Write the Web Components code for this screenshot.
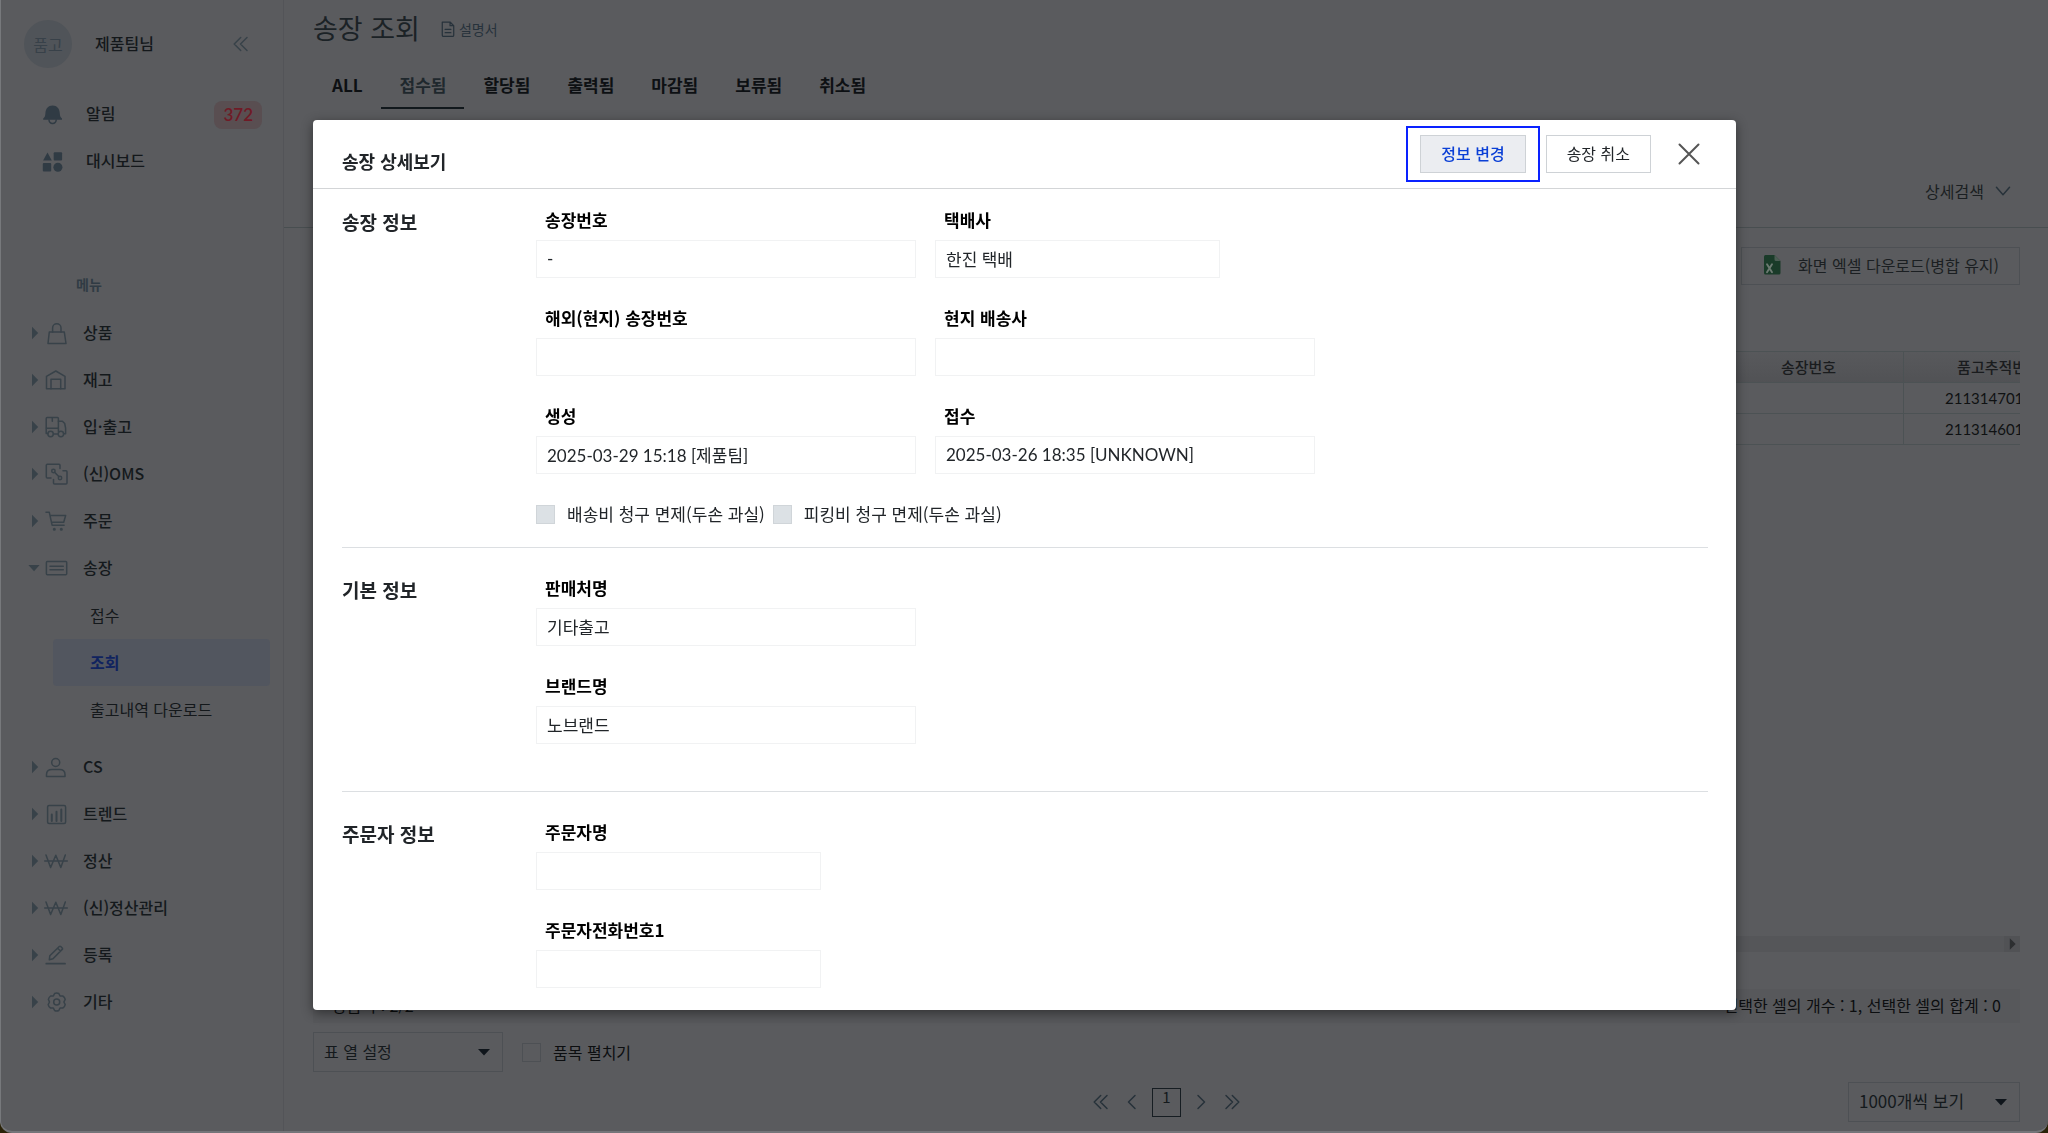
<!DOCTYPE html>
<html lang="ko">
<head>
<meta charset="utf-8">
<title>송장 조회</title>
<style>
  html, body { height: 100%; }
  body {
    margin: 0;
    overflow: hidden;
    background: #2a2208;
    color: #14181b;
    font-family: "Noto Sans CJK KR", sans-serif;
    font-size: 16px;
    line-height: 24px;
    --bg: #5a5b5e;
    --line: #4d5054;
    --icon: #384249;
    --numbers: Lato, "Noto Sans CJK KR", sans-serif;
  }
</style>
</head>
<body>
<app-shell>
  <side-bar slot="side"></side-bar>
  <invoice-page></invoice-page>
</app-shell>
<detail-dialog heading="송장 상세보기">
  <form-section heading="송장 정보">
    <form-row>
      <form-field label="송장번호" value="-"></form-field>
      <form-field label="택배사" value="한진 택배" size="short"></form-field>
    </form-row>
    <form-row>
      <form-field label="해외(현지) 송장번호"></form-field>
      <form-field label="현지 배송사"></form-field>
    </form-row>
    <form-row>
      <form-field label="생성" value="2025-03-29 15:18 [제품팀]"></form-field>
      <form-field label="접수" value="2025-03-26 18:35 [UNKNOWN]"></form-field>
    </form-row>
    <form-row tight>
      <check-box label="배송비 청구 면제(두손 과실)" disabled></check-box>
      <check-box label="피킹비 청구 면제(두손 과실)" disabled></check-box>
    </form-row>
  </form-section>
  <form-section heading="기본 정보" roomy>
    <form-row><form-field label="판매처명" value="기타출고"></form-field></form-row>
    <form-row><form-field label="브랜드명" value="노브랜드"></form-field></form-row>
  </form-section>
  <form-section heading="주문자 정보" roomy>
    <form-row><form-field label="주문자명" size="short"></form-field></form-row>
    <form-row><form-field label="주문자전화번호1" size="short"></form-field></form-row>
  </form-section>
</detail-dialog>

<script>
(function () {
  const ICONS = {
    bag: '<path d="M4.3 10h15L21 21.5H3z"/><path d="M7.6 10V6a4.2 4.2 0 0 1 8.4 0v4"/>',
    warehouse: '<path d="M1.5 19.7V7.3L10.8 2 20 7.3v12.4z"/><path d="M6 19.7V10.3h9.7v9.4"/>',
    truck: '<rect x="1.2" y="1.5" width="12.2" height="10.7" rx="1"/><path d="M7.3 2v3.2M1.2 12v5.5h1.5M8.5 18h4.3M13.4 5.3h4l2.3 2.2.9 4.7v5.6h-2M13.4 12v3.5"/><circle cx="5.6" cy="18" r="2.7"/><circle cx="15.9" cy="18" r="2.7"/>',
    link: '<path d="M15 5.5V2.200q0-1-1-1H2.300q-1 0-1 1V14q0 1 1 1H6"/><path d="M18 7.700h3q1 0 1 1V20q0 1-1 1H9.500q-1 0-1-1v-3.500M9.800 9.400l3.900 4.200"/><circle cx="8.400" cy="8" r="1.700"/><circle cx="15" cy="15" r="1.700"/>',
    cart: '<path d="M1 2.300h3.300l2.800 12.900h12M5 5.400h15.700l-2 6.900H6.500"/><circle cx="9.300" cy="19.300" r=".8"/><circle cx="16.300" cy="19.300" r=".8"/>',
    card: '<rect x="1.400" y="4.600" width="20.300" height="13.200" rx="1"/><path d="M5 9.300h13.300M5 12.800h13.300"/>',
    person: '<circle cx="10.700" cy="6.500" r="4"/><path d="M1.500 20.500v-2q0-5 5.500-5h7.500q5.500 0 5.500 5v2z"/>',
    chart: '<rect x="2.600" y="2.600" width="18" height="18" rx="1.500"/><path d="M6.800 11.500V18M11.500 8.700V18M16.300 6.500V18" stroke-width="2"/>',
    won: '<path d="M-.3 11H22.300M1 5l4.600 12.500L10.800 5.300l5 12.200L20.300 5"/>',
    pencil: '<path d="M1.300 19.700H20" stroke-width="1.800"/><path d="M4.300 15.800l.5-4L14.300 2.500q.7-.7 1.400 0l1.500 1.500q.7.700 0 1.400L8 14.700zM12.700 4.200l2.800 2.800"/>',
    gear: '<circle cx="11.700" cy="11" r="3"/><path d="M9.600 2.500q2.100-1 4.200 0l1.200 2.400 2.800.1q2 1.200 2.400 3.400L18.900 11l1.300 2.600q-.4 2.200-2.400 3.400l-2.800.1-1.200 2.400q-2.100 1-4.200 0l-1.200-2.400-2.800-.1q-2-1.200-2.400-3.400L4.500 11 3.400 8.400Q3.800 6.200 5.600 5l2.800-.1z"/>',
    bell: '<g fill="currentColor" stroke="none"><path d="M1.200 15.700v-1.200c1.600-1.200 2-2.300 2.200-5 .2-4.800 2.800-8 7.200-8s7 3.200 7.200 8c.2 2.700.6 3.800 2.200 5v1.200z"/></g><path d="M7 16c.4 4.600 6.800 4.600 7.200 0"/>',
    shapes: '<g fill="currentColor" stroke="none"><path d="M5.500 1.600l4.300 8H1.100z"/><rect x="11.700" y="1.200" width="8.400" height="8.400" rx="1"/><rect x=".8" y="12" width="8.400" height="8.400" rx="1"/><circle cx="15.900" cy="16.200" r="4.500"/></g>',
    first: '<path d="M10.700 4.500L4.200 11l6.500 6.500M17 4.500L10.500 11l6.500 6.500"/>',
    prev: '<path d="M14 4.500L7.500 11l6.500 6.500"/>',
    next: '<path d="M8 4.500l6.500 6.500L8 17.500"/>',
    last: '<path d="M5 4.500l6.500 6.500L5 17.500M11.300 4.500l6.500 6.500-6.500 6.500"/>',
    down: '<path d="M3 6.500l8 9 8-9" stroke-width="1.800"/>',
    close: '<path stroke-width="2" d="M1.500 1.500l19 19M20.500 1.500l-19 19"/>',
    document: '<path d="M4 2.500h9.500L18 7v11.500q0 1.500-1.500 1.500h-11Q4 20 4 18.500zM13.500 2.500V7H18M7.500 11.500h7M7.500 15.500h7"/>',
    excel: '<g stroke="none"><path fill="#1a3b29" d="M3 2.500q0-1.500 1.500-1.500h9L19.500 7v12q0 1.500-1.500 1.500H4.500Q3 20.500 3 19z"/><path fill="#4c5d54" d="M13.500 1l6 6h-4.500q-1.500 0-1.500-1.500z"/></g><path stroke="#6d7a72" stroke-width="1.900" d="M6 10.200l5 8M11 10.200l-5 8"/>',
    right: '<path fill="currentColor" stroke="none" d="M8 3l8 8-8 8z"/>',
    caret: '<path fill="currentColor" stroke="none" d="M5 8h12l-6 6.500z"/>',
    folded: '<path fill="currentColor" stroke="none" d="M5.500 2.500l8.500 8.500-8.500 8.500z"/>',
    unfolded: '<path fill="currentColor" stroke="none" d="M.5 7h15.500l-7.700 8.500z"/>'
  }

  function define (name, html, ready) {
    const template = document.createElement('template')
    template.innerHTML = html
    customElements.define(name, class extends HTMLElement {
      constructor () {
        super()
        this.attachShadow({ mode: 'open' }).appendChild(template.content.cloneNode(true))
      }
      connectedCallback () {
        if (ready) ready(this, this.shadowRoot)
      }
    })
  }

  define('app-icon', `
    <style>
      :host { display: block; flex: none; width: 22px; height: 22px; }
      svg { display: block; width: 100%; height: 100%; overflow: visible; }
    </style>
    <svg viewBox="0 0 22 22" fill="none" stroke="currentColor" stroke-width="1.5" stroke-linejoin="round" stroke-linecap="round" aria-hidden="true"></svg>
  `, (host, root) => {
    root.querySelector('svg').innerHTML = ICONS[host.getAttribute('name')]
  })

  define('app-shell', `
    <style>
      :host {
        display: grid;
        grid-template-columns: 283px minmax(0, 1fr);
        box-sizing: border-box;
        height: 100vh;
        background: var(--bg);
        border-left: 1px solid #77797c;
        border-bottom: 2px solid #747579;
        border-radius: 0 0 12px 12px;
        overflow: hidden;
      }
    </style>
    <slot name="side"></slot>
    <slot></slot>
  `)

  define('nav-item', `
    <style>
      :host { display: block; }
      a {
        display: flex;
        align-items: center;
        height: 47px;
        padding-left: 27px;
        color: #14191c;
        text-decoration: none;
        font-weight: 500;
      }
      app-icon { color: var(--icon); }
      .arrow { width: 16px; margin-right: 1px; }
      .arrow, .arrow svg { height: 16px; }
      .label { margin-left: 16px; padding-bottom: 2px; }
    </style>
    <a href="#"><app-icon class="arrow" name="folded"></app-icon><app-icon class="icon" name="card"></app-icon><span class="label"><slot></slot></span></a>
  `, (host, root) => {
    root.querySelector('.arrow').setAttribute('name', host.hasAttribute('open') ? 'unfolded' : 'folded')
    root.querySelector('.icon').setAttribute('name', host.getAttribute('icon'))
    root.querySelectorAll('app-icon').forEach(icon => icon.connectedCallback())
  })

  define('side-bar', `
    <style>
      :host { display: block; box-sizing: border-box; border-right: 1px solid #535458; }
      a { color: inherit; text-decoration: none; }
      header { display: flex; align-items: center; height: 48px; padding: 20px 31px 0 23px; }
      .avatar {
        display: grid;
        place-items: center;
        width: 48px;
        height: 48px;
        margin-right: 23px;
        border-radius: 50%;
        background: #505459;
        color: #384149;
      }
      .name { flex: 1; padding-bottom: 2px; font-weight: 500; }
      button { padding: 0; border: 0; background: none; color: var(--icon); }
      .quick { display: flex; align-items: center; height: 47px; padding: 0 21px 0 41px; font-weight: 500; }
      .quick app-icon { margin-right: 22px; color: #303b44; }
      .quick span { flex: 1; padding-bottom: 4px; }
      .top { padding-top: 23px; }
      .badge {
        padding: 2px 9px;
        border-radius: 8px;
        background: #594e51;
        color: #701a26;
        font: 600 17px/24px var(--numbers);
      }
      h2 { margin: 87px 0 13px 75px; color: #303b44; font-size: 14px; line-height: 24px; font-weight: 700; }
      ul { margin: 0; padding: 1px 13px 10px 52px; list-style: none; }
      li a { display: block; padding: 11px 0 12px 37px; border-radius: 4px; }
      li a.active { background: #52565f; color: #10235f; font-weight: 700; }
    </style>
    <header>
      <div class="avatar">품고</div>
      <span class="name">제품팀님</span>
      <button aria-label="메뉴 접기"><app-icon name="first"></app-icon></button>
    </header>
    <div class="top">
      <a class="quick" href="#"><app-icon name="bell"></app-icon><span>알림</span><b class="badge">372</b></a>
      <a class="quick" href="#"><app-icon name="shapes"></app-icon><span>대시보드</span></a>
    </div>
    <h2>메뉴</h2>
    <nav>
      <nav-item icon="bag">상품</nav-item>
      <nav-item icon="warehouse">재고</nav-item>
      <nav-item icon="truck">입·출고</nav-item>
      <nav-item icon="link">(신)OMS</nav-item>
      <nav-item icon="cart">주문</nav-item>
      <nav-item icon="card" open>송장</nav-item>
      <ul>
        <li><a href="#">접수</a></li>
        <li><a class="active" href="#">조회</a></li>
        <li><a href="#">출고내역 다운로드</a></li>
      </ul>
      <nav-item icon="person">CS</nav-item>
      <nav-item icon="chart">트렌드</nav-item>
      <nav-item icon="won">정산</nav-item>
      <nav-item icon="won">(신)정산관리</nav-item>
      <nav-item icon="pencil">등록</nav-item>
      <nav-item icon="gear">기타</nav-item>
    </nav>
  `)

  define('page-tabs', `
    <style>
      :host { display: flex; }
      button {
        padding: 0 18px 10px 19px;
        border: 0;
        border-bottom: 2px solid transparent;
        background: none;
        color: #0d1013;
        font: inherit;
        font-size: 17px;
        font-weight: 700;
      }
      button[aria-selected=true] { color: #1f282d; border-color: #11181c; }
    </style>
  `, (host, root) => {
    host.setAttribute('role', 'tablist')
    host.getAttribute('items').split(',').forEach(text => {
      const tab = document.createElement('button')
      tab.textContent = text
      tab.setAttribute('role', 'tab')
      tab.setAttribute('aria-selected', text === host.getAttribute('selected'))
      root.appendChild(tab)
    })
  })

  define('select-box', `
    <style>
      :host { display: grid; align-items: center; }
      select, app-icon { grid-area: 1 / 1; }
      select {
        appearance: none;
        width: 100%;
        height: 40px;
        padding: 0 10px 3px;
        border: 1px solid var(--line);
        border-radius: 0;
        background: none;
        color: #14191c;
        font: inherit;
      }
      app-icon { justify-self: end; margin-right: 8px; color: #0f151b; pointer-events: none; }
    </style>
    <select><option></option></select>
    <app-icon name="caret"></app-icon>
  `, (host, root) => {
    root.querySelector('option').textContent = host.getAttribute('value')
    root.querySelector('select').setAttribute('aria-label', host.getAttribute('label'))
  })

  define('check-box', `
    <style>
      :host { display: block; }
      label { display: flex; align-items: center; gap: 12px; }
      input {
        appearance: none;
        box-sizing: border-box;
        width: 19px;
        height: 19px;
        margin: 0;
        border: 1px solid var(--line);
      }
      input:disabled { background: #dce1e5; border-color: #d0d5d9; }
    </style>
    <label><input type="checkbox"><span></span></label>
  `, (host, root) => {
    root.querySelector('span').textContent = host.getAttribute('label')
    root.querySelector('input').disabled = host.hasAttribute('disabled')
  })

  define('data-grid', `
    <style>
      :host { display: flex; flex-direction: column; justify-content: space-between; overflow: hidden; }
      table {
        width: calc(100% + 74px);
        border-collapse: collapse;
        table-layout: fixed;
        font-size: 15px;
        line-height: 22px;
      }
      th, td { height: 30px; padding: 0 0 1px; border: 1px solid #4c5254; white-space: nowrap; box-sizing: border-box; }
      thead tr { background: linear-gradient(#58595c, #515255); }
      th { font-weight: 500; color: #1a1c1e; }
      td { padding-left: 41px; color: #0f1112; font-family: var(--numbers); }
      tr { height: 31px; }
      .fixed { width: 190px; }
      .scroll { display: flex; justify-content: flex-end; background: #555659; }
      .scroll button { width: 16px; height: 16px; padding: 0; border: 0; background: #515255; color: #2d2f31; }
      .scroll app-icon { width: 16px; height: 16px; }
    </style>
    <table>
      <thead><tr><th></th><th class="fixed">송장번호</th><th class="fixed">품고추적번호</th></tr></thead>
      <tbody>
        <tr><td></td><td></td><td>211314701</td></tr>
        <tr><td></td><td></td><td>211314601</td></tr>
      </tbody>
    </table>
    <div class="scroll"><button aria-label="오른쪽으로"><app-icon name="right"></app-icon></button></div>
  `)

  define('page-pager', `
    <style>
      :host { display: flex; align-items: center; gap: 9px; }
      button { padding: 0; border: 0; background: none; color: #27323a; font: inherit; }
      .current {
        width: 29px;
        height: 29px;
        padding-bottom: 11px;
        border: 1px solid #161d22;
        color: #14191c;
        font-size: 15px;
        line-height: 16px;
      }
    </style>
    <button aria-label="처음"><app-icon name="first"></app-icon></button>
    <button aria-label="이전"><app-icon name="prev"></app-icon></button>
    <button class="current">1</button>
    <button aria-label="다음"><app-icon name="next"></app-icon></button>
    <button aria-label="마지막"><app-icon name="last"></app-icon></button>
  `)

  define('invoice-page', `
    <style>
      :host { display: flex; flex-direction: column; min-height: 0; }
      .head { padding: 8px 28px 0 29px; }
      .title { display: flex; align-items: center; gap: 19px; }
      h1 { margin: 0; color: #1b2226; font-size: 27px; line-height: 40px; font-weight: 400; }
      .title a { display: flex; align-items: center; gap: 2px; padding-top: 2px; color: #27323b; font-size: 14px; text-decoration: none; }
      .title app-icon { width: 18px; height: 18px; }
      page-tabs { margin-top: 25px; }
      .search { display: flex; justify-content: flex-end; padding: 70px 36px 24px; border-bottom: 1px solid #484e50; }
      button { padding: 0; border: 0; background: none; color: #1b1f22; font: inherit; }
      .search button { display: flex; align-items: center; gap: 10px; }
      .search app-icon { width: 18px; height: 18px; color: #27323a; }
      .body { display: flex; flex: 1; flex-direction: column; min-height: 0; padding: 19px 28px 9px 29px; }
      .excel {
        display: flex;
        align-items: center;
        align-self: flex-end;
        gap: 15px;
        height: 38px;
        padding: 0 20px 2px 19px;
        border: 1px solid var(--line);
      }
      data-grid { flex: 1; margin-top: 66px; }
      .status {
        display: flex;
        justify-content: space-between;
        margin-top: 37px;
        padding: 4px 19px 6px;
        background: #57585b;
        color: #0c0e10;
      }
      .options { display: flex; align-items: center; gap: 19px; margin-top: 9px; color: #0c0e10; }
      .options select-box { width: 190px; }
      .foot { display: grid; grid-template-columns: 1fr auto 1fr; align-items: center; margin-top: 10px; }
      .foot page-pager { grid-column: 2; }
      .foot select-box { width: 172px; justify-self: end; font-size: 17px; }
    </style>
    <div class="head">
      <div class="title">
        <h1>송장 조회</h1>
        <a href="#"><app-icon name="document"></app-icon>설명서</a>
      </div>
      <page-tabs items="ALL,접수됨,할당됨,출력됨,마감됨,보류됨,취소됨" selected="접수됨"></page-tabs>
    </div>
    <div class="search"><button>상세검색<app-icon name="down"></app-icon></button></div>
    <div class="body">
      <button class="excel"><app-icon name="excel"></app-icon>화면 엑셀 다운로드(병합 유지)</button>
      <data-grid></data-grid>
      <div class="status"><span>상품 수: 2/2</span><span>선택한 셀의 개수 : 1, 선택한 셀의 합계 : 0</span></div>
      <div class="options">
        <select-box label="표 열 설정" value="표 열 설정"></select-box>
        <check-box label="품목 펼치기"></check-box>
      </div>
      <div class="foot">
        <page-pager></page-pager>
        <select-box label="페이지 크기" value="1000개씩 보기"></select-box>
      </div>
    </div>
  `)

  define('form-field', `
    <style>
      :host { display: block; width: 380px; }
      :host([size=short]) { width: 285px; }
      label { display: block; margin: 0 0 8px 9px; color: #000; font-weight: 700; }
      input {
        box-sizing: border-box;
        width: 100%;
        height: 38px;
        padding: 0 10px 2px;
        border: 1px solid #f1f2f3;
        background: #fff;
        color: #212529;
        font: inherit;
        font-family: var(--numbers);
      }
    </style>
    <label for="value"></label>
    <input id="value" readonly>
  `, (host, root) => {
    root.querySelector('label').textContent = host.getAttribute('label')
    root.querySelector('input').value = host.getAttribute('value') || ''
  })

  define('form-row', `
    <style>
      :host { display: flex; gap: 19px; }
      :host([tight]) { gap: 8px; }
    </style>
    <slot></slot>
  `)

  define('form-section', `
    <style>
      :host {
        display: grid;
        grid-template-columns: 194px minmax(0, 1fr);
        margin: 0 28px 0 29px;
        padding: 19px 0 21px;
        border-bottom: 1px solid #dcdfe2;
      }
      :host([roomy]) { padding: 28px 0 47px; }
      h3 { margin: 0; color: #212529; font-size: 19px; line-height: 28px; font-weight: 700; }
      .rows { display: flex; flex-direction: column; gap: 28px; }
    </style>
    <h3></h3>
    <div class="rows"><slot></slot></div>
  `, (host, root) => {
    root.querySelector('h3').textContent = host.getAttribute('heading')
  })

  define('detail-dialog', `
    <style>
      :host {
        position: fixed;
        inset: 0;
        display: flex;
        padding: 120px 312px 123px 313px;
        color: #212529;
        font-size: 17px;
      }
      section {
        flex: 1;
        min-width: 0;
        overflow: hidden;
        border-radius: 4px;
        background: #fff;
        box-shadow: 0 3px 12px rgba(0, 0, 0, .45);
      }
      header {
        display: flex;
        align-items: center;
        height: 68px;
        padding: 0 36px 0 29px;
        border-bottom: 1px solid #d3d5d7;
      }
      h2 { flex: 1; margin: 0; padding-top: 14px; font-size: 18px; line-height: 24px; font-weight: 700; }
      button {
        height: 38px;
        padding: 0 20px 2px;
        border: 1px solid #ced2d6;
        background: #fff;
        color: #212529;
        font: inherit;
        font-size: 16px;
      }
      .focus { margin-right: 6px; padding: 7px 12px; border: 2px solid #0a22ff; }
      .focus button { display: block; background: #ebedf1; color: #0a3fd6; font-weight: 500; }
      .close { display: block; height: 22px; margin-left: 27px; padding: 0; border: 0; color: #555; }
    </style>
    <section role="dialog" aria-modal="true" aria-labelledby="title">
      <header>
        <h2 id="title"></h2>
        <div class="focus"><button>정보 변경</button></div>
        <button>송장 취소</button>
        <button class="close" aria-label="닫기"><app-icon name="close"></app-icon></button>
      </header>
      <slot></slot>
    </section>
  `, (host, root) => {
    root.querySelector('h2').textContent = host.getAttribute('heading')
  })
})()
</script>
</body>
</html>
